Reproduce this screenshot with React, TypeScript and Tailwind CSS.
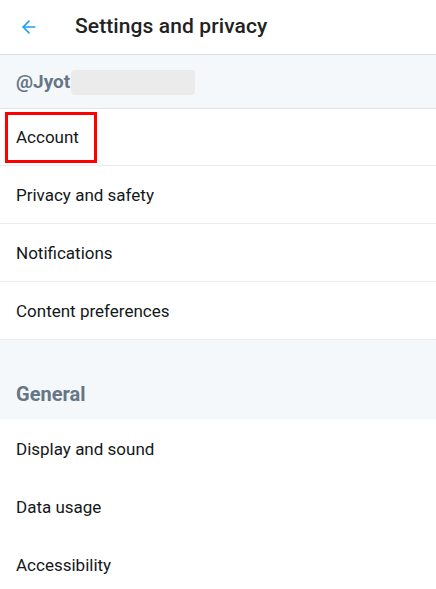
import { ArrowLeft } from "lucide-react";

const topItems = ["Account", "Privacy and safety", "Notifications", "Content preferences"];
const generalItems = ["Display and sound", "Data usage", "Accessibility"];

export default function App() {
  return (
    <div
      className="w-[436px] h-[589px] bg-white overflow-hidden text-[#14171a]"
      style={{ fontFamily: "Roboto, 'Noto Sans', sans-serif" }}
    >
      <header className="h-[55px] flex items-center pb-[1px] border-b border-[#d9dde1]">
        <ArrowLeft size={20} strokeWidth={2} className="ml-[19px] text-[#1da1f2]" />
        <h1 className="ml-[36px] text-[21px] font-medium tracking-[0.1px] text-[#222]">Settings and privacy</h1>
      </header>

      <div className="h-[54px] bg-[#f5f8fa] border-b border-[#e1e5e8] flex items-center pl-4 pt-[1px]">
        <span className="text-[19px] font-bold text-[#657786]">@Jyot</span>
        <span className="ml-[1px] h-[25px] w-[124px] bg-[#ebebeb] rounded-sm" />
      </div>

      <ul>
        {topItems.map((item, i) => (
          <li
            key={item}
            className={`${i === 0 ? "h-[57px]" : "h-[58px]"} border-b border-[#e6ecf0] flex items-center pl-4 pt-[3px] text-[17px]`}
          >
            {i === 0 ? (
              <span className="-ml-[11px] -mt-[3px] pl-[8px] pr-[15px] h-[51px] flex items-center pt-[2px] border-[3px] border-[#ff0000]">
                {item}
              </span>
            ) : (
              item
            )}
          </li>
        ))}
      </ul>

      <div className="h-[79px] bg-[#f5f8fa] flex items-end pl-4 pb-[10px]">
        <span className="text-[20px] font-bold text-[#657786]">General</span>
      </div>

      <ul className="pt-[2px]">
        {generalItems.map((item) => (
          <li key={item} className="h-[58px] flex items-center pl-4 text-[17px]">
            {item}
          </li>
        ))}
      </ul>
    </div>
  );
}
